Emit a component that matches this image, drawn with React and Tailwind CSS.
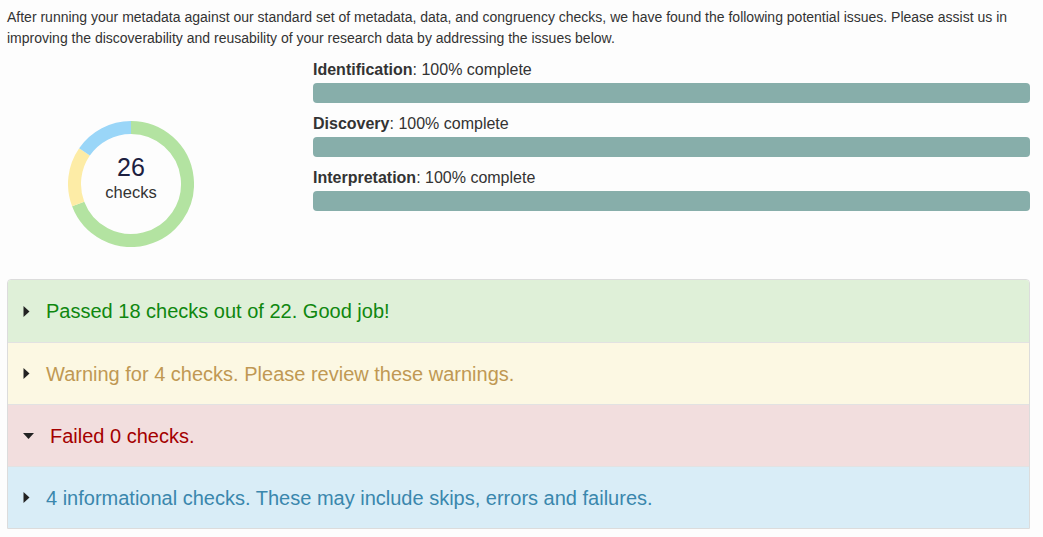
import React from 'react';

const segments = [
  { value: 18, color: '#b3e3a1' },
  { value: 4, color: '#fdeca6' },
  { value: 4, color: '#9ad6f8' },
];

const polar = (cx, cy, r, deg) => {
  const a = ((deg - 90) * Math.PI) / 180;
  return [cx + r * Math.cos(a), cy + r * Math.sin(a)];
};

const Donut = () => {
  const total = segments.reduce((s, x) => s + x.value, 0);
  let start = 0;
  return (
    <div className="relative w-[126px] h-[126px]">
      <svg width="126" height="126" viewBox="0 0 126 126">
        {segments.map((seg, i) => {
          const sweep = (seg.value / total) * 360;
          const [x1, y1] = polar(63, 63, 56.5, start);
          const [x2, y2] = polar(63, 63, 56.5, start + sweep);
          const large = sweep > 180 ? 1 : 0;
          start += sweep;
          return (
            <path
              key={i}
              d={`M ${x1} ${y1} A 56.5 56.5 0 ${large} 1 ${x2} ${y2}`}
              fill="none"
              stroke={seg.color}
              strokeWidth="13"
            />
          );
        })}
      </svg>
      <div className="absolute inset-0 flex flex-col items-center justify-center">
        <div className="text-[25px] leading-[28px] text-[#1c2040] mt-[-14px]">26</div>
        <div className="text-[16.5px] leading-[20px] text-[#333] mt-[1px]">checks</div>
      </div>
    </div>
  );
};

const Progress = ({ label }) => (
  <div className="mb-[11px]">
    <div className="text-[16px] leading-[20px] text-[#333]">
      <span className="font-bold">{label}</span>: 100% complete
    </div>
    <div className="mt-[3px] h-[20px] rounded-[4px] bg-[#87aeaa]" />
  </div>
);

const Caret = ({ open }) =>
  open ? (
    <svg width="11" height="6" viewBox="0 0 11 6" className="shrink-0">
      <path d="M0 0 L11 0 L5.5 6 Z" fill="#222" />
    </svg>
  ) : (
    <svg width="7" height="11" viewBox="0 0 7 11" className="shrink-0">
      <path d="M0.5 0 L6.5 5.5 L0.5 11 Z" fill="#222" />
    </svg>
  );

const rows = [
  { text: 'Passed 18 checks out of 22. Good job!', bg: 'bg-[#dff0d8]', fg: 'text-[#0f870f]' },
  { text: 'Warning for 4 checks. Please review these warnings.', bg: 'bg-[#fcf8e3]', fg: 'text-[#c09853]' },
  { text: 'Failed 0 checks.', bg: 'bg-[#f2dede]', fg: 'text-[#a40000]', open: true },
  { text: '4 informational checks. These may include skips, errors and failures.', bg: 'bg-[#d9edf7]', fg: 'text-[#3a87ad]' },
];

const App = () => {
  return (
    <div className="min-h-[537px] bg-[#fdfdfd] pl-[7px] pr-[13px] pt-[7px] font-['Liberation_Sans',Helvetica,Arial,sans-serif]">
      <p className="text-[14px] leading-[21px] text-[#333]">
        After running your metadata against our standard set of metadata, data, and congruency checks, we have found the following potential issues. Please assist us in improving the discoverability and reusability of your research data by addressing the issues below.
      </p>
      <div className="flex mt-[11px] mb-[32px]">
        <div className="w-[306px] shrink-0 pt-[61px] pl-[61px]">
          <Donut />
        </div>
        <div className="flex-1">
          <Progress label="Identification" />
          <Progress label="Discovery" />
          <Progress label="Interpretation" />
        </div>
      </div>
      <div className="border border-[#dcdcdc] rounded-t-[4px] overflow-hidden">
        {rows.map((r, i) => (
          <div
            key={i}
            className={`h-[62px] flex items-center ${r.bg} ${i > 0 ? 'border-t border-[#e2e2e2]' : ''}`}
          >
            <div className={`flex items-center ${r.open ? 'pl-[15px] gap-[16px]' : 'pl-[15px] gap-[16px]'}`}>
              <Caret open={r.open} />
              <span className={`text-[20px] leading-[24px] ${r.fg}`}>{r.text}</span>
            </div>
          </div>
        ))}
      </div>
    </div>
  );
};

export default App;
